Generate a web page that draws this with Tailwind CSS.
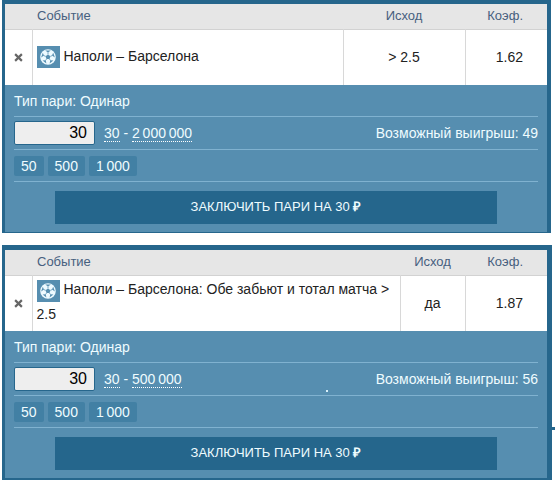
<!DOCTYPE html>
<html lang="ru">
<head>
  <meta charset="UTF-8" />
  <meta name="viewport" content="width=device-width, initial-scale=1.0" />
  <title>Купон</title>
  <script src="https://cdn.jsdelivr.net/npm/@tailwindcss/browser@4"></script>
</head>
<body class="bg-white font-['Liberation_Sans',Arial,sans-serif] text-sm text-[#222]">
  <!-- Мяч для ячейки события -->
  <svg class="hidden" aria-hidden="true">
    <symbol id="ball" viewBox="0 0 16 16">
      <circle cx="8" cy="8" r="7.8" fill="#eefaff" />
      <g fill="#568eb0">
        <path d="M8 5.4l2.5 1.8-1 2.9h-3l-1-2.9z" />
        <path d="M5.2 1.4h5.6L8 3.6z" />
        <path d="M13.2 3.8l1.7 4.6-2.9-1.8z" />
        <path d="M2.8 3.8L1.1 8.4 4 6.6z" />
        <path d="M13.4 11.6l-3.8 2.9.7-3.3z" />
        <path d="M2.6 11.6l3.8 2.9-.7-3.3z" />
      </g>
      <path d="M8 5.4v-2M10.5 7.2l1.8-.6M9.5 10.1l1 1.4M6.5 10.1l-1 1.4M5.5 7.2l-1.8-.6" stroke="#568eb0" stroke-width=".8" />
    </symbol>
  </svg>

  <main class="ml-0.5 flex flex-col gap-3">
    <!-- Купон 1 -->
    <section class="mr-1 border-x-3 border-t-4 border-r-4 border-b border-[#26668c] bg-[#568eb0]">
      <table class="w-full table-fixed bg-white">
        <colgroup>
          <col class="w-[27px]" />
          <col />
          <col class="w-[122px]" />
          <col class="w-[82px]" />
        </colgroup>
        <thead>
          <tr class="h-[25px] border-b border-[#d2d2d2] bg-[#e6e6e6] text-[13px] leading-4 text-[#46607f]">
            <td></td>
            <th scope="col" class="pl-[5px] text-left font-normal">Событие</th>
            <th scope="col" class="text-center font-normal">Исход</th>
            <th scope="col" class="pr-6 text-right font-normal">Коэф.</th>
          </tr>
        </thead>
        <tbody>
          <tr class="h-14">
            <td class="text-center align-middle">
              <button type="button" aria-label="Удалить" class="block w-full">
                <svg class="mx-auto size-[9px]" viewBox="0 0 8 8"><path d="M1 1l6 6M7 1L1 7" stroke="#666" stroke-width="1.9" /></svg>
              </button>
            </td>
            <td class="border-l border-[#d8d8d8] pb-0.5 pl-1 leading-[25px]">
              <span class="mr-1 inline-flex h-[22px] w-[23px] items-center justify-center bg-[#568eb0] align-middle"><svg class="size-4"><use href="#ball" /></svg></span>Наполи – Барселона
            </td>
            <td class="border-l border-[#d8d8d8] text-center">&gt; 2.5</td>
            <td class="border-l border-[#d8d8d8] pr-6 text-right">1.62</td>
          </tr>
        </tbody>
      </table>
      <div class="px-[9px] pb-2 text-[#effcff]">
        <p class="h-8 border-b border-[#80b2d0] leading-8">Тип пари: Одинар</p>
        <div class="flex h-[33px] items-center border-b border-[#80b2d0]">
          <input type="text" value="30" aria-label="Сумма пари" class="h-6 w-[81px] rounded-xs border border-[#26668c] bg-[#eee] px-[7px] text-right text-base text-black" />
          <p class="ml-[9px] leading-4"><a href="#" class="inline-block border-b border-dotted border-white">30</a> - <a href="#" class="inline-block border-b border-dotted border-white">2&thinsp;000&thinsp;000</a></p>
          <p class="ml-auto">Возможный выигрыш: 49</p>
        </div>
        <div class="flex h-8 items-center gap-1 border-b border-[#80b2d0]">
          <button type="button" class="h-5 rounded-xs bg-[#4280a4] px-[7px]">50</button>
          <button type="button" class="h-5 rounded-xs bg-[#4280a4] px-[7px]">500</button>
          <button type="button" class="h-5 rounded-xs bg-[#4280a4] px-[7px]">1&thinsp;000</button>
        </div>
        <div class="mt-[9px] px-[41px]">
          <button type="button" class="h-[33px] w-full bg-[#25668c] text-[13px]">ЗАКЛЮЧИТЬ ПАРИ НА 30 <b>₽</b></button>
        </div>
      </div>
    </section>

    <!-- Купон 2 -->
    <section class="relative mr-[3px] border-x-3 border-t-5 border-r-5 border-b-2 border-[#26668c] bg-[#568eb0]">
      <table class="w-full table-fixed bg-white">
        <colgroup>
          <col class="w-[27px]" />
          <col />
          <col class="w-[65px]" />
          <col class="w-[82px]" />
        </colgroup>
        <thead>
          <tr class="h-[25px] border-b border-[#d2d2d2] bg-[#e6e6e6] text-[13px] leading-4 text-[#46607f]">
            <td></td>
            <th scope="col" class="pl-[5px] text-left font-normal">Событие</th>
            <th scope="col" class="text-center font-normal">Исход</th>
            <th scope="col" class="pr-6 text-right font-normal">Коэф.</th>
          </tr>
        </thead>
        <tbody>
          <tr class="h-14">
            <td class="text-center align-middle">
              <button type="button" aria-label="Удалить" class="block w-full">
                <svg class="mx-auto size-[9px]" viewBox="0 0 8 8"><path d="M1 1l6 6M7 1L1 7" stroke="#666" stroke-width="1.9" /></svg>
              </button>
            </td>
            <td class="border-l border-[#d8d8d8] pb-0.5 pl-1 leading-[25px]">
              <span class="mr-1 inline-flex h-[22px] w-[23px] items-center justify-center bg-[#568eb0] align-middle"><svg class="size-4"><use href="#ball" /></svg></span>Наполи – Барселона: Обе забьют и тотал матча &gt; 2.5
            </td>
            <td class="border-l border-[#d8d8d8] text-center">да</td>
            <td class="border-l border-[#d8d8d8] pr-6 text-right">1.87</td>
          </tr>
        </tbody>
      </table>
      <div class="px-[9px] pb-2 text-[#effcff]">
        <p class="h-8 border-b border-[#80b2d0] leading-8">Тип пари: Одинар</p>
        <div class="flex h-[33px] items-center border-b border-[#80b2d0]">
          <input type="text" value="30" aria-label="Сумма пари" class="h-6 w-[81px] rounded-xs border border-[#26668c] bg-[#eee] px-[7px] text-right text-base text-black" />
          <p class="ml-[9px] leading-4"><a href="#" class="inline-block border-b border-dotted border-white">30</a> - <a href="#" class="inline-block border-b border-dotted border-white">500&thinsp;000</a></p>
          <span class="ml-36 mt-6 size-0.5 bg-[#d9f0fa]"></span>
          <p class="ml-auto">Возможный выигрыш: 56</p>
        </div>
        <div class="flex h-8 items-center gap-1 border-b border-[#80b2d0]">
          <button type="button" class="h-5 rounded-xs bg-[#4280a4] px-[7px]">50</button>
          <button type="button" class="h-5 rounded-xs bg-[#4280a4] px-[7px]">500</button>
          <button type="button" class="h-5 rounded-xs bg-[#4280a4] px-[7px]">1&thinsp;000</button>
        </div>
        <div class="mt-[9px] px-[41px]">
          <button type="button" class="h-[33px] w-full bg-[#25668c] text-[13px]">ЗАКЛЮЧИТЬ ПАРИ НА 30 <b>₽</b></button>
        </div>
      </div>
      <!-- Край соседней панели -->
      <span class="absolute -right-2 bottom-12 h-[3px] w-[3px] bg-[#26668c]"></span>
    </section>
  </main>
</body>
</html>
